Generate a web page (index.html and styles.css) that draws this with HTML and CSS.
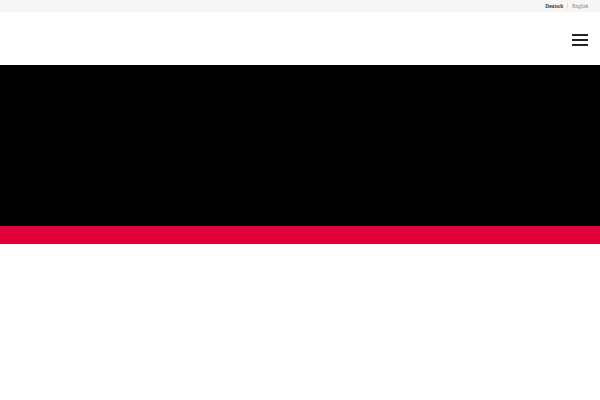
FILE: index.html
```html
<!DOCTYPE html>
<html lang="de">
<head>
<meta charset="utf-8">
<title>Seite</title>
<link rel="stylesheet" href="styles.css">
</head>
<body>
<div class="topbar">
  <nav class="lang">
    <a class="lang-item active" href="#">Deutsch</a>
    <span class="sep"></span>
    <a class="lang-item" href="#">English</a>
  </nav>
</div>
<header class="header">
  <button class="burger" aria-label="Menü">
    <span></span><span></span><span></span>
  </button>
</header>
<section class="hero"></section>
<div class="redband"></div>
<main class="content"></main>
</body>
</html>
```
FILE: styles.css
```css
html, body { margin: 0; padding: 0; background: #fff; }
body { font-family: "Liberation Serif", serif; }
.topbar {
  height: 12px;
  background: #f6f6f6;
  display: flex;
  justify-content: flex-end;
  align-items: center;
  padding-right: 12px;
}
.lang { display: flex; align-items: center; gap: 4px; }
.lang-item { font-size: 5.2px; color: #777; text-decoration: none; line-height: 12px; }
.lang-item.active { color: #333; font-weight: bold; }
.sep { width: 1px; height: 6px; background: #ddd; }
.header {
  height: 53px;
  display: flex;
  justify-content: flex-end;
  align-items: center;
  padding-right: 12px;
}
.burger {
  background: none; border: 0; padding: 0; margin-top: 3px;
  width: 16px; display: flex; flex-direction: column; gap: 3.5px;
}
.burger span { display: block; height: 1.6px; background: #222; }
.hero { height: 161px; background: #000; }
.redband { height: 18px; background: #e2003c; }
.content { height: 156px; }
```
